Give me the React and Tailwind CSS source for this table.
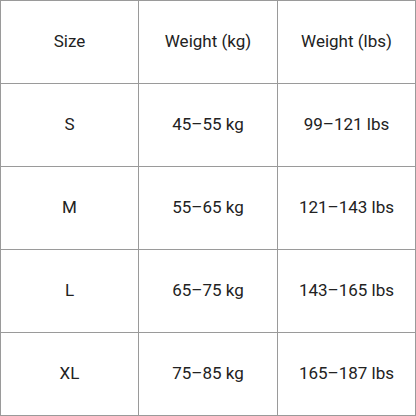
import React from "react";

const rows = [
  ["Size", "Weight (kg)", "Weight (lbs)"],
  ["S", "45–55 kg", "99–121 lbs"],
  ["M", "55–65 kg", "121–143 lbs"],
  ["L", "65–75 kg", "143–165 lbs"],
  ["XL", "75–85 kg", "165–187 lbs"],
];

export default function App() {
  return (
    <div className="w-[416px] h-[416px] bg-white">
      <div
        className="grid grid-cols-[138px_139px_138px] grid-rows-[repeat(5,83px)] border-r border-b border-[#9a9a9a] text-[17px] text-[#222]"
        style={{ fontFamily: "Roboto, sans-serif" }}
      >
        {rows.map((row, i) =>
          row.map((cell, j) => (
            <div
              key={`${i}-${j}`}
              className="flex items-center justify-center border-t border-l border-[#9a9a9a]"
            >
              {cell}
            </div>
          ))
        )}
      </div>
    </div>
  );
}
